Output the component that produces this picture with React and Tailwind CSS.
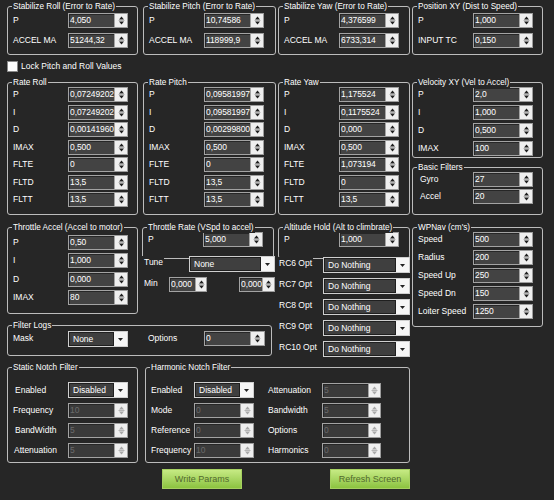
import clsx from "clsx";

function SpinBtns({ dis, className }) {
  const c = dis ? "#a8a8a8" : "#1e1e1e";
  return (
    <div className={clsx("h-full flex items-center justify-center bg-[#efefef] border border-l-0 border-[#9d9d9d]", className)}>
      <svg width="7" height="11" viewBox="0 0 7 11">
        <path d="M1 4.5 L3.5 1.5 L6 4.5Z" fill={c} />
        <line x1="0.5" y1="5.5" x2="6.5" y2="5.5" stroke="#b5b5b5" strokeWidth="1" />
        <path d="M1 6.5 L3.5 9.5 L6 6.5Z" fill={c} />
      </svg>
    </div>
  );
}

function Num({ v, dis, w = "w-[47px]", sw = "w-[13px]", className }) {
  return (
    <div className={clsx("flex h-[15px] shrink-0", className)}>
      <div
        className={clsx(
          "h-full border border-[#a3a3a3] shadow-[inset_1px_1px_0_#262626] pl-[1px] overflow-hidden whitespace-nowrap leading-[13px] tracking-[-0.1px]",
          w,
          dis ? "text-[#6b6b6b] bg-[#3a3a3a]" : "text-white bg-[#434343]"
        )}
      >
        {v}
      </div>
      <SpinBtns dis={dis} className={sw} />
    </div>
  );
}

function Sel({ v, w = "w-[60px]", className }) {
  return (
    <div className={clsx("flex h-[16px] border border-[#cfcfcf] shrink-0", w, className)}>
      <div className="flex-1 bg-[#3f3f3f] border border-[#1f1f1f] pl-[3px] text-white leading-[12px] whitespace-nowrap overflow-hidden">
        {v}
      </div>
      <div className="w-[13px] bg-[#f6f6f6] flex items-center justify-center">
        <svg width="5" height="3" viewBox="0 0 5 3">
          <path d="M0 0H5L2.5 3Z" fill="#222" />
        </svg>
      </div>
    </div>
  );
}

function Row({ label, lw = "w-[55px]", ind, h = "h-[15px]", children }) {
  return (
    <div className={clsx("flex items-center", h)}>
      <span className={clsx("shrink-0 whitespace-nowrap", lw, ind)}>{label}</span>
      {children}
    </div>
  );
}

function Box({ title, className, children }) {
  return (
    <div className={clsx("relative border border-[#bcbcbc] rounded-[3px] shrink-0", className)}>
      <span className="absolute -top-[6px] left-[4px] bg-[#262626] px-[1px] text-[8.2px] leading-[11px] whitespace-nowrap">
        {title}
      </span>
      {children}
    </div>
  );
}

function Btn({ children, className }) {
  return (
    <div
      className={clsx(
        "w-[80px] h-[20px] flex items-center justify-center border border-[#a6d160] bg-linear-to-b from-[#c6ea83] to-[#8cc33f] text-[#51692d] text-[9px]",
        className
      )}
    >
      {children}
    </div>
  );
}

const rateRoll = [
  ["P", "0,07249202"],
  ["I", "0,07249202"],
  ["D", "0,00141960"],
  ["IMAX", "0,500"],
  ["FLTE", "0"],
  ["FLTD", "13,5"],
  ["FLTT", "13,5"],
];
const ratePitch = [
  ["P", "0,09581997"],
  ["I", "0,09581997"],
  ["D", "0,00299800"],
  ["IMAX", "0,500"],
  ["FLTE", "0"],
  ["FLTD", "13,5"],
  ["FLTT", "13,5"],
];
const rateYaw = [
  ["P", "1,175524"],
  ["I", "0,1175524"],
  ["D", "0,000"],
  ["IMAX", "0,500"],
  ["FLTE", "1,073194"],
  ["FLTD", "0"],
  ["FLTT", "13,5"],
];
const velocity = [
  ["P", "2,0"],
  ["I", "1,000"],
  ["D", "0,500"],
  ["IMAX", "100"],
];
const wpnav = [
  ["Speed", "500"],
  ["Radius", "200"],
  ["Speed Up", "250"],
  ["Speed Dn", "150"],
  ["Loiter Speed", "1250"],
];

function RateBox({ title, rows, className }) {
  return (
    <Box title={title} className={clsx("h-[133px] pt-[4px] pl-[5px] flex flex-col gap-[2.5px]", className)}>
      {rows.map(([l, v]) => (
        <Row key={l} label={l}>
          <Num v={v} />
        </Row>
      ))}
    </Box>
  );
}

export default function App() {
  return (
    <div className="w-[554px] h-[500px] overflow-hidden bg-[#262626] text-white font-['Liberation_Sans',Arial,sans-serif] text-[8.5px] leading-[11px] pt-[6px] pl-[7px]">
      {/* stabilize row */}
      <div className="flex">
        <Box title="Stabilize Roll (Error to Rate)" className="w-[131px] h-[49px] pt-[6px] pl-[5px] flex flex-col gap-[5px]">
          <Row label="P"><Num v="4,050" /></Row>
          <Row label="ACCEL MA"><Num v="51244,32" /></Row>
        </Box>
        <Box title="Stabilize Pitch (Error to Rate)" className="ml-[5px] w-[133px] h-[49px] pt-[6px] pl-[5px] flex flex-col gap-[5px]">
          <Row label="P"><Num v="10,74586" /></Row>
          <Row label="ACCEL MA"><Num v="118999,9" /></Row>
        </Box>
        <Box title="Stabilize Yaw (Error to Rate)" className="ml-[2px] w-[132px] h-[49px] pt-[6px] pl-[5px] flex flex-col gap-[5px]">
          <Row label="P"><Num v="4,376599" /></Row>
          <Row label="ACCEL MA"><Num v="6733,314" /></Row>
        </Box>
        <Box title="Position XY (Dist to Speed)" className="ml-[2px] w-[131px] h-[49px] pt-[6px] pl-[5px] flex flex-col gap-[5px]">
          <Row label="P"><Num v="1,000" /></Row>
          <Row label="INPUT TC"><Num v="0,150" /></Row>
        </Box>
      </div>

      {/* lock checkbox */}
      <div className="mt-[6px] flex items-center h-[11px]">
        <div className="w-[11px] h-[11px] bg-white border border-[#8a8a8a]" />
        <span className="ml-[3px]">Lock Pitch and Roll Values</span>
      </div>

      {/* rate row */}
      <div className="mt-[10px] flex">
        <RateBox title="Rate Roll" rows={rateRoll} className="w-[131px]" />
        <RateBox title="Rate Pitch" rows={ratePitch} className="ml-[5px] w-[133px]" />
        <RateBox title="Rate Yaw" rows={rateYaw} className="ml-[2px] w-[132px]" />
        <div className="ml-[2px] w-[131px] flex flex-col">
          <Box title="Velocity XY (Vel to Accel)" className="h-[76px] pt-[4px] pl-[5px] flex flex-col gap-[3px]">
            {velocity.map(([l, v]) => (
              <Row key={l} label={l}><Num v={v} /></Row>
            ))}
          </Box>
          <Box title="Basic Filters" className="mt-[9px] h-[48px] pt-[4px] pl-[5px] flex flex-col gap-[2px]">
            <Row label="Gyro" ind="pl-[2px]"><Num v="27" /></Row>
            <Row label="Accel" ind="pl-[2px]"><Num v="20" /></Row>
          </Box>
        </div>
      </div>

      {/* throttle / altitude / wpnav row */}
      <div className="mt-[12px] flex items-start">
        <div className="w-[268px] flex flex-col">
          <div className="flex">
            <Box title="Throttle Accel (Accel to motor)" className="w-[131px] h-[87px] pt-[7px] pl-[5px] flex flex-col gap-[3.3px]">
              <Row label="P"><Num v="0,50" /></Row>
              <Row label="I"><Num v="1,000" /></Row>
              <Row label="D"><Num v="0,000" /></Row>
              <Row label="IMAX"><Num v="80" /></Row>
            </Box>
            <div className="ml-[4px] w-[133px] flex flex-col">
              <Box title="Throttle Rate (VSpd to accel)" className="w-[132px] h-[32px] pt-[4px] pl-[5px]">
                <Row label="P"><Num v="5,000" /></Row>
              </Box>
              <div className="relative -mt-[3px] flex items-start h-[16px]">
                <span className="bg-[#262626] pl-[2px] pr-[1px] leading-[12px]">Tune</span>
                <Sel v="None" w="w-[86px]" className="ml-auto" />
              </div>
              <div className="mt-[5px] flex items-start h-[15px]">
                <span className="ml-[2px] w-[25px] leading-[12px]">Min</span>
                <Num v="0,000" w="w-[27px]" sw="w-[11px]" />
                <Num v="0,000" w="w-[24px]" sw="w-[12px]" className="ml-[32px]" />
              </div>
            </div>
          </div>
          <Box title="Filter Logs" className="mt-[11px] w-[265px] h-[31px] pt-[5px] pl-[5px] flex items-start">
            <span className="w-[55px] leading-[14px]">Mask</span>
            <Sel v="None" />
            <span className="ml-[20px] w-[56px] leading-[14px]">Options</span>
            <Num v="0" sw="w-[14px]" />
          </Box>
        </div>

        <div className="ml-[3px] w-[132px] flex flex-col">
          <Box title="Altitude Hold (Alt to climbrate)" className="w-[132px] h-[32px] pt-[4px] pl-[5px]">
            <Row label="P"><Num v="1,000" /></Row>
          </Box>
          <div className="relative -mt-[2px] flex flex-col gap-[5px]">
            {["RC6 Opt", "RC7 Opt", "RC8 Opt", "RC9 Opt", "RC10 Opt"].map((l) => (
              <div key={l} className="flex items-start h-[16px]">
                <span className="bg-[#262626] pl-[1px] pr-[1px] leading-[12px] whitespace-nowrap">{l}</span>
                <Sel v="Do Nothing" w="w-[87px]" className="ml-auto" />
              </div>
            ))}
          </div>
        </div>

        <Box title="WPNav (cm's)" className="ml-[2px] w-[131px] h-[100px] pt-[4px] pl-[5px] flex flex-col gap-[3px]">
          {wpnav.map(([l, v]) => (
            <Row key={l} label={l}><Num v={v} /></Row>
          ))}
        </Box>
      </div>

      {/* notch filters */}
      <div className="mt-[10px] flex">
        <Box title="Static Notch Filter" className="w-[131px] h-[96px] pt-[14px] pl-[5px] flex flex-col gap-[4px]">
          <Row label="Enabled" ind="pl-[2px]" h="h-[16px]"><Sel v="Disabled" /></Row>
          <Row label="Frequency" h="h-[16px]"><Num v="10" dis /></Row>
          <Row label="BandWidth" ind="pl-[2px]" h="h-[16px]"><Num v="5" dis /></Row>
          <Row label="Attenuation" ind="pl-[1px]" h="h-[16px]"><Num v="5" dis /></Row>
        </Box>
        <Box title="Harmonic Notch Filter" className="ml-[7px] w-[265px] h-[96px] pt-[14px] pl-[5px] flex">
          <div className="flex flex-col gap-[4px]">
            <Row label="Enabled" lw="w-[43px]" h="h-[16px]"><Sel v="Disabled" /></Row>
            <Row label="Mode" lw="w-[43px]" h="h-[16px]"><Num v="0" dis /></Row>
            <Row label="Reference" lw="w-[43px]" h="h-[16px]"><Num v="0" dis /></Row>
            <Row label="Frequency" lw="w-[43px]" h="h-[16px]"><Num v="10" dis /></Row>
          </div>
          <div className="ml-[14px] flex flex-col gap-[4px]">
            <Row label="Attenuation" lw="w-[54px]" h="h-[16px]"><Num v="5" dis sw="w-[12px]" /></Row>
            <Row label="Bandwidth" lw="w-[54px]" h="h-[16px]"><Num v="5" dis sw="w-[12px]" /></Row>
            <Row label="Options" lw="w-[54px]" h="h-[16px]"><Num v="0" dis sw="w-[12px]" /></Row>
            <Row label="Harmonics" lw="w-[54px]" h="h-[16px]"><Num v="0" dis sw="w-[12px]" /></Row>
          </div>
        </Box>
      </div>

      {/* buttons */}
      <div className="mt-[6px] flex">
        <Btn className="ml-[155px]">Write Params</Btn>
        <Btn className="ml-[88px]">Refresh Screen</Btn>
      </div>
    </div>
  );
}
